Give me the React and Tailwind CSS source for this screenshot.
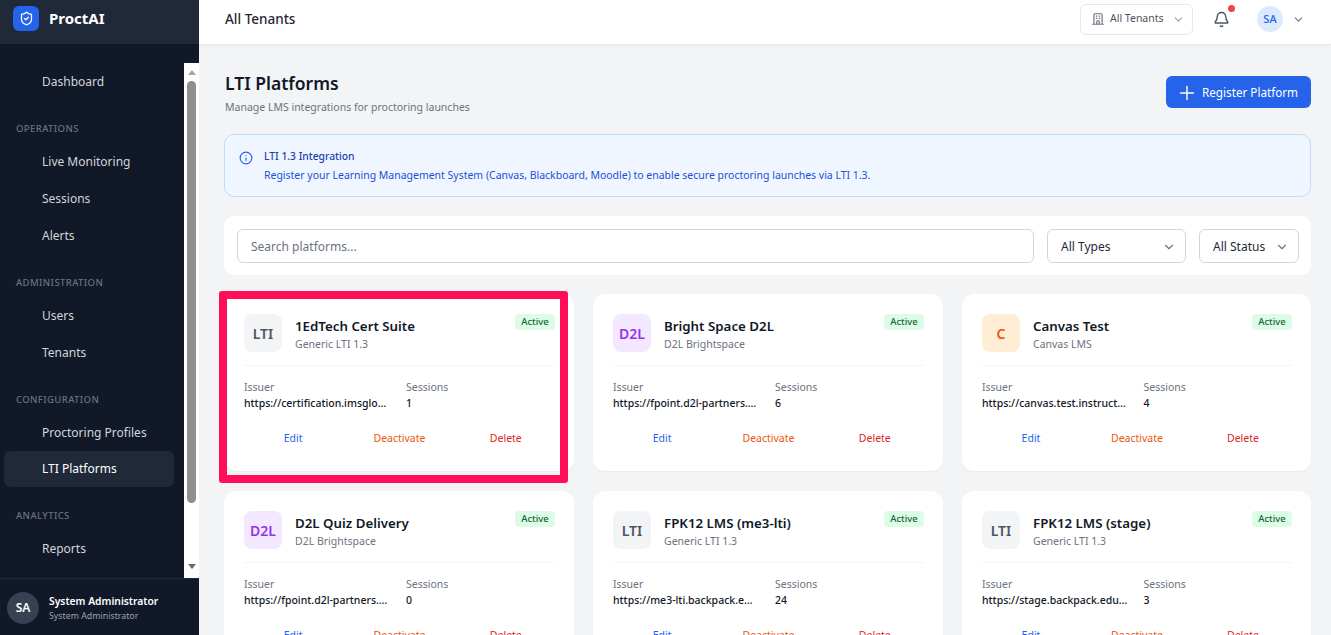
import { Bell, ChevronDown, Info, Plus, ShieldCheck } from "lucide-react";
import { HiOutlineOfficeBuilding } from "react-icons/hi";

const sections = [
  { items: ["Dashboard"] },
  { label: "Operations", items: ["Live Monitoring", "Sessions", "Alerts"] },
  { label: "Administration", items: ["Users", "Tenants"] },
  { label: "Configuration", items: ["Proctoring Profiles", "LTI Platforms"] },
  { label: "Analytics", items: ["Reports"] },
];

const platforms = [
  { name: "1EdTech Cert Suite", type: "Generic LTI 1.3", badge: "LTI", issuer: "https://certification.imsglo…", sessions: 1 },
  { name: "Bright Space D2L", type: "D2L Brightspace", badge: "D2L", issuer: "https://fpoint.d2l-partners.…", sessions: 6 },
  { name: "Canvas Test", type: "Canvas LMS", badge: "C", issuer: "https://canvas.test.instruct…", sessions: 4 },
  { name: "D2L Quiz Delivery", type: "D2L Brightspace", badge: "D2L", issuer: "https://fpoint.d2l-partners.…", sessions: 0 },
  { name: "FPK12 LMS (me3-lti)", type: "Generic LTI 1.3", badge: "LTI", issuer: "https://me3-lti.backpack.e…", sessions: 24 },
  { name: "FPK12 LMS (stage)", type: "Generic LTI 1.3", badge: "LTI", issuer: "https://stage.backpack.edu…", sessions: 3 },
];

const badgeClass = {
  LTI: "bg-[#f3f4f6] text-[#4b5563]",
  D2L: "bg-[#f3e8ff] text-[#9333ea]",
  C: "bg-[#ffedd5] text-[#ea580c]",
};

function Sidebar() {
  return (
    <aside className="flex h-full w-[199px] shrink-0 flex-col bg-[#111827]">
      <div className="flex h-[44px] shrink-0 items-start gap-[10px] bg-[#1f2937] pt-[6px] pl-[13px]">
        <div className="flex h-[25px] w-[26px] items-center justify-center rounded-[6px] bg-[#2563eb]">
          <ShieldCheck size={15} className="text-white" strokeWidth={2} />
        </div>
        <span className="text-[15px] leading-[25px] font-bold text-white">ProctAI</span>
      </div>
      <div className="flex min-h-0 flex-1 pt-[19px]">
        <nav className="min-w-0 flex-1 overflow-hidden pt-[1px]">
          {sections.map((s, i) => (
            <div key={i} className={i === 0 ? "" : "mt-[17.5px]"}>
              {s.label && (
                <div className="mb-[2.5px] flex h-[24px] items-center pl-[16px] text-[9.5px] font-medium tracking-[0.4px] text-[#6b7280] uppercase">
                  {s.label}
                </div>
              )}
              {s.items.map((item) => (
                <div
                  key={item}
                  className={
                    "mr-[10px] ml-[4px] flex h-[36px] items-center rounded-[6px] pl-[38px] text-[12px] " +
                    (item === "LTI Platforms" ? "mt-[-1px] mb-[2px] bg-[#1f2937] text-white" : "mb-[1px] text-[#d1d5db]")
                  }
                >
                  {item}
                </div>
              ))}
            </div>
          ))}
        </nav>
        <div className="flex w-[15px] shrink-0 flex-col items-center bg-white">
          <div className="mt-[7px] h-0 w-0 border-x-[4.5px] border-b-[5px] border-x-transparent border-b-[#a3a3a3]" />
          <div className="mt-[6px] h-[422px] w-[9px] rounded-[5px] bg-[#8f8f8f]" />
          <div className="mt-auto mb-[9px] h-0 w-0 border-x-[4.5px] border-t-[5px] border-x-transparent border-t-[#6b6b6b]" />
        </div>
      </div>
      <div className="flex h-[57px] shrink-0 items-start gap-[10px] border-t border-[#1f2937] pt-[13px] pl-[7px]">
        <div className="flex h-[32px] w-[32px] items-center justify-center rounded-full bg-[#374151] text-[12px] font-semibold text-white">
          SA
        </div>
        <div className="pt-[2px]">
          <div className="text-[10.3px] leading-[15px] font-semibold text-white">System Administrator</div>
          <div className="text-[8.8px] leading-[14px] text-[#9ca3af]">System Administrator</div>
        </div>
      </div>
    </aside>
  );
}

function Header() {
  return (
    <header className="flex h-[45px] shrink-0 items-center justify-between border-b border-[#e5e7eb] bg-white pr-[26px] pb-[6px] pl-[26px] shadow-[0_1px_2px_rgba(0,0,0,0.03)]">
      <span className="text-[13.5px] font-medium text-[#1f2937]">All Tenants</span>
      <div className="flex items-center">
        <div className="flex h-[31px] w-[113px] items-center gap-[5px] rounded-[6px] border border-[#e5e7eb] pl-[10px] text-[10.5px] text-[#4b5563]">
          <HiOutlineOfficeBuilding size={14} className="text-[#6b7280]" />
          <span>All Tenants</span>
          <ChevronDown size={13} className="ml-[3px] text-[#9ca3af]" />
        </div>
        <div className="relative ml-[20px]">
          <Bell size={17} className="text-[#4b5563]" />
          <span className="absolute top-[-6px] right-[-5px] h-[7px] w-[7px] rounded-full bg-[#ef4444]" />
        </div>
        <div className="ml-[27px] flex h-[26px] w-[26px] items-center justify-center rounded-full bg-[#dbeafe] text-[11px] font-medium text-[#2563eb]">
          SA
        </div>
        <ChevronDown size={13} className="ml-[9px] text-[#6b7280]" />
      </div>
    </header>
  );
}

function PlatformCard({ p }) {
  return (
    <div className="h-[177px] rounded-[12px] bg-white pt-[20px] pr-[19px] pl-[20px] shadow-[0_1px_2px_rgba(0,0,0,0.04)]">
      <div className="flex items-start justify-between border-b border-[#f3f4f6] pb-[13px]">
        <div className="flex items-center gap-[13px]">
          <div className={"flex h-[38px] w-[38px] items-center justify-center rounded-[8px] text-[14px] font-semibold " + badgeClass[p.badge]}>
            {p.badge}
          </div>
          <div className="pt-[2px]">
            <div className="text-[13.3px] leading-[20px] font-semibold text-[#111827]">{p.name}</div>
            <div className="text-[10.5px] leading-[16px] text-[#6b7280]">{p.type}</div>
          </div>
        </div>
        <span className="w-[40px] rounded-[4px] bg-[#dcfce7] text-center text-[9.5px] leading-[16px] font-medium text-[#166534]">Active</span>
      </div>
      <div className="mt-[13px] grid grid-cols-2 gap-x-[13px]">
        <div>
          <div className="text-[10.5px] leading-[16px] text-[#6b7280]">Issuer</div>
          <div className="text-[10.5px] leading-[16px] font-medium whitespace-nowrap text-[#111827]">{p.issuer}</div>
        </div>
        <div>
          <div className="text-[10.5px] leading-[16px] text-[#6b7280]">Sessions</div>
          <div className="text-[10.5px] leading-[16px] font-medium text-[#111827]">{p.sessions}</div>
        </div>
      </div>
      <div className="mt-[19px] grid grid-cols-3 gap-x-[8px] text-center text-[10.5px] leading-[16px]">
        <span className="text-[#2563eb]">Edit</span>
        <span className="text-[#ea580c]">Deactivate</span>
        <span className="text-[#dc2626]">Delete</span>
      </div>
    </div>
  );
}

export default function App() {
  return (
    <div className="flex h-[635px] w-[1331px] overflow-hidden bg-[#f3f4f6] font-['Noto_Sans',sans-serif]">
      <Sidebar />
      <div className="flex min-w-0 flex-1 flex-col">
        <Header />
        <main className="relative min-h-0 flex-1 overflow-hidden pt-[26px] pr-[20px] pl-[25px]">
          <div className="flex items-start justify-between">
            <div className="pl-[1px]">
              <h1 className="text-[17.5px] leading-[24px] font-semibold text-[#111827]">LTI Platforms</h1>
              <p className="mt-[4px] text-[10.5px] leading-[16px] text-[#6b7280]">Manage LMS integrations for proctoring launches</p>
            </div>
            <button className="mt-[5px] flex h-[32px] w-[145px] items-center gap-[4px] rounded-[6px] bg-[#2563eb] pt-[1px] pl-[10px] text-[11.7px] text-white">
              <Plus size={22} strokeWidth={1.6} />
              Register Platform
            </button>
          </div>

          <div className="mt-[19px] flex h-[63px] items-start gap-[11px] rounded-[10px] border border-[#bfdbfe] bg-[#eff6ff] pt-[13px] pl-[14px]">
            <Info size={14} className="mt-[3px] text-[#2563eb]" />
            <div>
              <div className="text-[10.3px] leading-[16px] font-medium text-[#1e40af]">LTI 1.3 Integration</div>
              <div className="mt-[3px] text-[10.47px] leading-[16px] text-[#1d4ed8]">
                Register your Learning Management System (Canvas, Blackboard, Moodle) to enable secure proctoring launches via LTI 1.3.
              </div>
            </div>
          </div>

          <div className="mt-[19px] flex h-[59px] items-center gap-[13px] rounded-[10px] bg-white pr-[12px] pl-[13px]">
            <div className="flex h-[34px] flex-1 items-center rounded-[6px] border border-[#d1d5db] pt-[2px] pl-[13px] text-[12px] text-[#6b7280]">
              Search platforms...
            </div>
            <div className="flex h-[34px] w-[139px] items-center justify-between rounded-[6px] border border-[#d1d5db] pt-[2px] pr-[9px] pl-[13px] text-[12px] text-[#1f2937]">
              All Types
              <ChevronDown size={14} className="text-[#6b7280]" />
            </div>
            <div className="flex h-[34px] w-[100px] items-center justify-between rounded-[6px] border border-[#d1d5db] pt-[2px] pr-[9px] pl-[13px] text-[12px] text-[#1f2937]">
              All Status
              <ChevronDown size={14} className="text-[#6b7280]" />
            </div>
          </div>

          <div className="mt-[19px] grid grid-cols-[350px_350px_349px] gap-x-[19px] gap-y-[20px]">
            {platforms.map((p) => (
              <PlatformCard key={p.name} p={p} />
            ))}
          </div>

          {/* highlight drawn over the first card */}
          <div className="absolute top-[246px] left-[20px] h-[192px] w-[349px] rounded-[3px] border-[8px] border-[#ff0f5a]" />
        </main>
      </div>
    </div>
  );
}
